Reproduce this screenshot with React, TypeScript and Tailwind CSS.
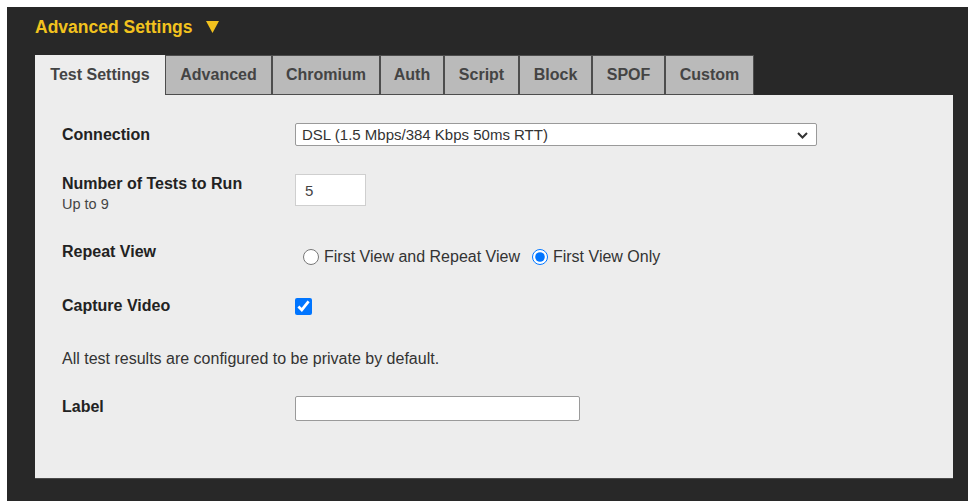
import React from "react";

const tabs: { name: string; w: string }[] = [
  { name: "Advanced", w: "w-[107px]" },
  { name: "Chromium", w: "w-[108px]" },
  { name: "Auth", w: "w-[64px]" },
  { name: "Script", w: "w-[75px]" },
  { name: "Block", w: "w-[73px]" },
  { name: "SPOF", w: "w-[73px]" },
  { name: "Custom", w: "w-[89px]" },
];

const font = { fontFamily: '"Liberation Sans", Arial, sans-serif' };

export default function App() {
  return (
    <div className="h-[501px] w-[968px] bg-white pl-[7px] pt-[7px]" style={font}>
      <div className="flex h-full flex-col bg-[#282828] pl-[28px] pr-[15px] pt-[9px]">
        <h2 className="flex items-center text-[17.5px] font-bold leading-[22px] text-[#f2c21e]">
          <span>Advanced Settings</span>
          <svg className="ml-[13px]" width="13" height="12" viewBox="0 0 13 12">
            <path d="M0 0h13L6.5 12z" fill="#f2c21e" />
          </svg>
        </h2>

        {/* tab strip */}
        <div className="mt-[17px] flex h-[40px]">
          <div className="flex w-[130px] items-center justify-center bg-[#ededed] text-[16px] font-bold text-[#444]">
            Test Settings
          </div>
          {tabs.map((t) => (
            <div
              key={t.name}
              className={`flex ${t.w} items-center justify-center border border-[#4d4d4d] bg-[#bababa] text-[16px] font-bold text-[#444]`}
            >
              {t.name}
            </div>
          ))}
        </div>

        {/* settings panel */}
        <div className="h-[384px] border-b border-[#4a4a4a] bg-[#ededed] pl-[27px] pt-[28px] text-[#222]">
          <div className="flex h-[23px] items-center">
            <div className="w-[233px] text-[16px] font-bold text-[#222]">Connection</div>
            <div className="relative w-[522px]">
              <select
                className="h-[23px] w-full appearance-none rounded-[2px] border border-[#9a9a9a] bg-white pl-[6px] text-[15px] text-[#333] outline-none"
                defaultValue="dsl"
              >
                <option value="dsl">DSL (1.5 Mbps/384 Kbps 50ms RTT)</option>
              </select>
              <svg
                className="pointer-events-none absolute right-[9px] top-[9px]"
                width="11"
                height="7"
                viewBox="0 0 11 7"
              >
                <path d="M1 1l4.5 4.5L10 1" fill="none" stroke="#333" strokeWidth="2" />
              </svg>
            </div>
          </div>

          <div className="mt-[28px] flex items-start">
            <div className="w-[233px] pt-[1px]">
              <div className="text-[16px] font-bold leading-[18px] text-[#222]">Number of Tests to Run</div>
              <div className="mt-[3px] text-[14.5px] leading-[17px] text-[#444]">Up to 9</div>
            </div>
            <input
              className="h-[32px] w-[71px] border border-[#cfcfcf] bg-white pl-[9px] text-[15px] text-[#444] outline-none"
              defaultValue="5"
            />
          </div>

          <div className="mt-[30px] flex items-start">
            <div className="w-[233px] text-[16px] font-bold leading-[18px] text-[#222]">Repeat View</div>
            <div className="mt-[5px] flex items-center text-[16px] leading-[18px] text-[#333]">
              <label className="ml-[8px] flex items-center">
                <input type="radio" name="rv" className="m-0 h-[16px] w-[16px]" />
                <span className="ml-[5px]">First View and Repeat View</span>
              </label>
              <label className="ml-[12px] flex items-center">
                <input type="radio" name="rv" defaultChecked className="m-0 h-[16px] w-[16px]" />
                <span className="ml-[5px]">First View Only</span>
              </label>
            </div>
          </div>

          <div className="mt-[31px] flex h-[18px] items-center">
            <div className="w-[233px] text-[16px] font-bold text-[#222]">Capture Video</div>
            <input type="checkbox" defaultChecked className="m-0 h-[17px] w-[17px]" />
          </div>

          <p className="mt-[35px] text-[16px] leading-[18px] text-[#333]">
            All test results are configured to be private by default.
          </p>

          <div className="mt-[28px] flex h-[25px] items-start">
            <div className="w-[233px] pt-[2px] text-[16px] font-bold leading-[18px] text-[#222]">Label</div>
            <input className="h-[25px] w-[285px] rounded-[2px] border border-[#9a9a9a] bg-white outline-none" />
          </div>
        </div>
      </div>
    </div>
  );
}
